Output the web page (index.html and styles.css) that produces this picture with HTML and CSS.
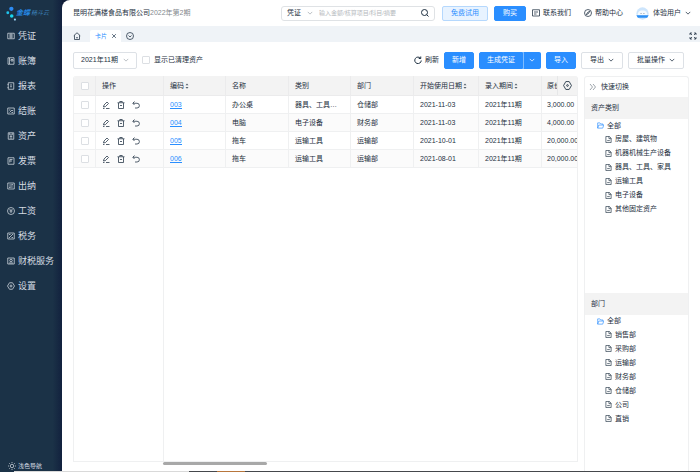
FILE: index.html
```html
<!DOCTYPE html>
<html lang="zh-CN">
<head>
<meta charset="utf-8">
<title>卡片 - 固定资产</title>
<link rel="stylesheet" href="styles.css">
</head>

<body>
<!-- shared icons -->
<svg class="sprite" aria-hidden="true">
  <symbol id="edit" viewBox="0 0 16 16"><path d="M3 12l1-4 6-6 3 3-6 6-4 1zM8 15h7M2 15h3"/></symbol>
  <symbol id="trash" viewBox="0 0 16 16"><path d="M1 3.500h14M5.500 3V1h5v2M3 4v11h10V4M6 9h4"/></symbol>
  <symbol id="undo" viewBox="0 0 16 16"><path d="M5 1L1.500 4.500 5 8M2 4.500h8a4.500 4.500 0 0 1 0 9.500H6"/></symbol>
  <symbol id="down" viewBox="0 0 16 16"><path d="M2 5l6 6 6-6"/></symbol>
  <symbol id="sort" viewBox="0 0 8 16"><path d="M1 6.500L4 3l3 3.500zM1 10l3 3.500L7 10z"/></symbol>
  <symbol id="doc" viewBox="0 0 16 16"><path d="M2 1h8l4 4v10H2zM9 1v5h5M5 10.500h6"/></symbol>
  <symbol id="folder" viewBox="0 0 16 16"><path d="M1.500 14V2h5l2 2.500h5V7M1.500 14L4 7h11.500L13 14z"/></symbol>
</svg>

<div class="app">
  <aside class="sidebar">
    <div class="logo">
      <svg class="logo-mark" viewBox="0 0 28 42">
        <circle cx="15" cy="8" r="6" fill="#2d8cf5"/>
        <circle cx="5" cy="19" r="4" fill="#1fc4ee"/>
        <circle cx="16" cy="28" r="5" fill="#18d6ee"/>
        <circle cx="25" cy="38" r="3" fill="#9fd4f5"/>
      </svg>
      <b>金蝶</b><i>精斗云</i>
    </div>
    <nav class="menu">
      <a href="#"><svg viewBox="0 0 16 16"><path d="M1.500 2.500h13v11h-13zM4 6h8M4 10h8M8 3v10"/></svg>凭证</a>
      <a href="#"><svg viewBox="0 0 16 16"><path d="M2 1.500h12v13H2zM5 2v12M8 5h4v3H8z"/></svg>账簿</a>
      <a href="#"><svg viewBox="0 0 16 16"><path d="M2.500 1.500h11v13h-11zM6 6h4M6 9.500h4M1 5h2M1 11h2"/></svg>报表</a>
      <a href="#"><svg viewBox="0 0 16 16"><path d="M1.500 2h13v12h-13zM4 6h3M5 11l5-5 2 2M9 11h3"/></svg>结账</a>
      <a href="#"><svg viewBox="0 0 16 16"><path d="M2.500 1.500h11v13h-11zM5.500 2v4h5V2M5.500 9h5M5.500 12h5"/></svg>资产</a>
      <a href="#"><svg viewBox="0 0 16 16"><path d="M2 1.500h12v13H2zM5.500 5H11M6 8h4M5.500 5v6"/></svg>发票</a>
      <a href="#"><svg viewBox="0 0 16 16"><path d="M1.500 2h13v12h-13zM4.500 6h7l-2-2M11.500 10h-7l2 2"/></svg>出纳</a>
      <a href="#"><svg viewBox="0 0 16 16"><circle cx="8" cy="8" r="7"/><path d="M5 4l3 3 3-3M5 8h6M8 7v5"/></svg>工资</a>
      <a href="#"><svg viewBox="0 0 16 16"><path d="M1.500 2h13v12h-13zM4 12l8-8M4 5h3M9 11h3"/></svg>税务</a>
      <a href="#"><svg viewBox="0 0 16 16"><path d="M1.500 2h13v12h-13zM4 12h8"/><circle cx="8" cy="7" r="2.500"/></svg>财税服务</a>
      <a href="#"><svg viewBox="0 0 16 16"><path d="M5 1.500h6L15 8l-4 6.500H5L1 8z"/><circle cx="8" cy="8" r="2"/></svg>设置</a>
    </nav>
    <button class="theme"><svg viewBox="0 0 16 16"><circle cx="8" cy="8" r="3.500"/><path d="M8 0v2M8 14v2M0 8h2M14 8h2M2.500 2.500l1.500 1.500M12 12l1.500 1.500M13.500 2.500L12 4M4 12l-1.500 1.500"/></svg>浅色导航</button>
  </aside>

  <div class="main">
    <header class="header">
      <div class="company">昆明花满楼食品有限公司<span>2022年第2期</span></div>
      <form class="search">
        <button type="button" class="search-type">凭证<svg><use href="#down"/></svg></button>
        <input type="text" aria-label="搜索" placeholder="输入金额/核算项目/科目/摘要">
        <button type="button" class="search-go" aria-label="查询"><svg viewBox="0 0 16 16"><circle cx="7" cy="7" r="6"/><path d="M11.500 11.500L15 15"/></svg></button>
      </form>
      <button class="btn trial">免费试用</button>
      <button class="btn primary buy">购买</button>
      <a class="link contact" href="#"><svg viewBox="0 0 16 16"><path d="M1 1.500h14v12.500H1zM4 6h8M4 10h5"/></svg>联系我们</a>
      <a class="link help" href="#"><svg viewBox="0 0 16 16"><circle cx="8" cy="8" r="7"/><path d="M11.500 4.500L9 9l-4.500 2.500L7 7z"/></svg>帮助中心</a>
      <button class="user">
        <svg class="avatar" viewBox="0 0 36 36"><circle cx="18" cy="18" r="17" fill="#cde5fc"/><path d="M4 23c2-10 5-13 14-13s12 3 14 13z" fill="#f4faff"/><path d="M1 23h34l-4 7H5z" fill="#2b8ff5"/><path d="M13 18h2M21 18h2" stroke="#33475c" stroke-width="2"/></svg>
        体验用户<svg><use href="#down"/></svg>
      </button>
    </header>

    <div class="tabs">
      <a href="#" class="home" aria-label="首页"><svg viewBox="0 0 16 16"><path d="M1.500 7.500L8 1.500l6.500 6M3 6.500V15h10V6.500M6 11.500h4"/></svg></a>
      <div class="tab">卡片<button aria-label="关闭"><svg viewBox="0 0 16 16"><path d="M3 3l10 10M13 3L3 13"/></svg></button></div>
      <button class="more" aria-label="更多"><svg viewBox="0 0 16 16"><circle cx="8" cy="8" r="7"/><path d="M5 7l3 3 3-3"/></svg></button>
      <button class="full" aria-label="全屏"><svg viewBox="0 0 16 16"><path d="M2 6V2h4M10 2h4v4M14 10v4h-4M6 14H2v-4M2 2l4 4M14 2l-4 4M2 14l4-4M14 14l-4-4"/></svg></button>
    </div>

    <div class="toolbar">
      <button class="btn period">2021年11期<svg><use href="#down"/></svg></button>
      <label class="cleared"><input type="checkbox">显示已清理资产</label>
      <button class="refresh"><svg viewBox="0 0 16 16"><path d="M13 4.500A6.500 6.500 0 1 0 14.500 9M13.500 1v4h-4"/></svg>刷新</button>
      <button class="btn primary">新增</button>
      <div class="split">
        <button class="btn primary">生成凭证</button>
        <button class="btn primary drop" aria-label="更多凭证操作"><svg><use href="#down"/></svg></button>
      </div>
      <button class="btn primary">导入</button>
      <button class="btn">导出<svg><use href="#down"/></svg></button>
      <button class="btn">批量操作<svg><use href="#down"/></svg></button>
    </div>

    <div class="content">
      <section class="grid">
        <div class="grid-view">
          <table>
            <colgroup>
              <col class="c-check"><col class="c-ops"><col class="c-short"><col class="c-text"><col class="c-short"><col class="c-text"><col class="c-date"><col class="c-text"><col class="c-text">
            </colgroup>
            <thead>
              <tr>
                <th class="check"><input type="checkbox" aria-label="全选"></th>
                <th>操作</th>
                <th>编码<svg><use href="#sort"/></svg></th>
                <th>名称</th>
                <th>类别</th>
                <th>部门</th>
                <th>开始使用日期<svg><use href="#sort"/></svg></th>
                <th>录入期间<svg><use href="#sort"/></svg></th>
                <th>原价</th>
              </tr>
            </thead>
            <tbody>
              <tr>
                <td class="check"><input type="checkbox" aria-label="选择003"></td>
                <td class="ops"><button aria-label="编辑"><svg><use href="#edit"/></svg></button><button aria-label="删除"><svg><use href="#trash"/></svg></button><button aria-label="还原"><svg><use href="#undo"/></svg></button></td>
                <td><a href="#">003</a></td><td>办公桌</td><td>器具、工具…</td><td>仓储部</td><td>2021-11-03</td><td>2021年11期</td><td>3,000.00</td>
              </tr>
              <tr>
                <td class="check"><input type="checkbox" aria-label="选择004"></td>
                <td class="ops"><button aria-label="编辑"><svg><use href="#edit"/></svg></button><button aria-label="删除"><svg><use href="#trash"/></svg></button><button aria-label="还原"><svg><use href="#undo"/></svg></button></td>
                <td><a href="#">004</a></td><td>电脑</td><td>电子设备</td><td>财务部</td><td>2021-11-03</td><td>2021年11期</td><td>4,000.00</td>
              </tr>
              <tr>
                <td class="check"><input type="checkbox" aria-label="选择005"></td>
                <td class="ops"><button aria-label="编辑"><svg><use href="#edit"/></svg></button><button aria-label="删除"><svg><use href="#trash"/></svg></button><button aria-label="还原"><svg><use href="#undo"/></svg></button></td>
                <td><a href="#">005</a></td><td>拖车</td><td>运输工具</td><td>运输部</td><td>2021-10-01</td><td>2021年11期</td><td>20,000.00</td>
              </tr>
              <tr>
                <td class="check"><input type="checkbox" aria-label="选择006"></td>
                <td class="ops"><button aria-label="编辑"><svg><use href="#edit"/></svg></button><button aria-label="删除"><svg><use href="#trash"/></svg></button><button aria-label="还原"><svg><use href="#undo"/></svg></button></td>
                <td><a href="#">006</a></td><td>拖车</td><td>运输工具</td><td>运输部</td><td>2021-08-01</td><td>2021年11期</td><td>20,000.00</td>
              </tr>
            </tbody>
          </table>
          <div class="frozen"></div>
          <button class="columns" aria-label="列设置"><svg viewBox="0 0 16 16"><path d="M5 1h6l4 7-4 7H5L1 8z"/><circle cx="8" cy="8" r="1.500"/></svg></button>
        </div>
        <div class="scroll"><div class="thumb"></div></div>
      </section>

      <aside class="panel">
        <button class="panel-top"><svg viewBox="0 0 16 16"><path d="M2 2l5 6-5 6M8 2l5 6-5 6"/></svg>快速切换</button>
        <section class="group types">
          <h2>资产类别</h2>
          <div class="tree">
            <a href="#" class="root"><svg><use href="#folder"/></svg>全部</a>
            <a href="#"><svg><use href="#doc"/></svg>房屋、建筑物</a>
            <a href="#"><svg><use href="#doc"/></svg>机器机械生产设备</a>
            <a href="#"><svg><use href="#doc"/></svg>器具、工具、家具</a>
            <a href="#"><svg><use href="#doc"/></svg>运输工具</a>
            <a href="#"><svg><use href="#doc"/></svg>电子设备</a>
            <a href="#"><svg><use href="#doc"/></svg>其他固定资产</a>
          </div>
        </section>
        <section class="group depts">
          <h2>部门</h2>
          <div class="tree">
            <a href="#" class="root"><svg><use href="#folder"/></svg>全部</a>
            <a href="#"><svg><use href="#doc"/></svg>销售部</a>
            <a href="#"><svg><use href="#doc"/></svg>采购部</a>
            <a href="#"><svg><use href="#doc"/></svg>运输部</a>
            <a href="#"><svg><use href="#doc"/></svg>财务部</a>
            <a href="#"><svg><use href="#doc"/></svg>仓储部</a>
            <a href="#"><svg><use href="#doc"/></svg>公司</a>
            <a href="#"><svg><use href="#doc"/></svg>直销</a>
          </div>
        </section>
      </aside>
    </div>
  </div>
</div>
<div class="edge"></div>
</body>
</html>
```

FILE: styles.css
```css
* {box-sizing: border-box;}

body {
  margin: 0;
  height: 100vh;
  display: flex;
  flex-direction: column;
  overflow: hidden;
  font: 7px/12px "Liberation Sans", "Noto Sans CJK SC", sans-serif;
  color: #1d2f40;
  background: #101d38;
}

button, input {
  font: inherit;
  color: inherit;
  margin: 0;
}
button {
  display: inline-flex;
  align-items: center;
  padding: 0;
  border: 0;
  background: none;
  white-space: nowrap;
}
a {color: inherit; text-decoration: none;}

svg {
  width: 8px;
  height: 8px;
  flex: none;
  fill: none;
  stroke: currentColor;
  stroke-width: 2;
}
.sprite {position: absolute; width: 0; height: 0;}

input[type="checkbox"] {
  appearance: none;
  width: 8px;
  height: 8px;
  border: 1px solid #dcdfe3;
  border-radius: 1px;
  background: #fff;
}

.app {display: flex; flex: 1; min-height: 0;}

/* sidebar */
.sidebar {
  flex: none;
  width: 62px;
  display: flex;
  flex-direction: column;
  color: #d5dce3;
  background: linear-gradient(to right, #1b3247 85%, #12213e);
}
.logo {
  display: flex;
  align-items: center;
  height: 23px;
  padding: 3px 0 0 6px;
  color: #2589e6;
  font-style: italic;
}
.logo b {font-size: 7px; margin-right: 1px;}
.logo i {font-size: 6px; color: #3d83bd;}
.logo-mark {width: 10px; height: 15px; stroke: none;}
.menu {display: flex; flex-direction: column;}
.menu a {
  display: flex;
  align-items: center;
  gap: 3px;
  height: 25px;
  padding-left: 7px;
  font-size: 9px;
  white-space: nowrap;
}
.menu svg {stroke-width: 1.5;}
.theme {
  gap: 2px;
  margin-top: auto;
  padding-left: 8px;
  font-size: 6px;
  line-height: 10px;
}
.theme svg {stroke-width: 1.5;}

/* main area */
.main {
  flex: 1;
  min-width: 0;
  display: flex;
  flex-direction: column;
  background: #fff;
  border-top-left-radius: 8px;
  overflow: hidden;
}
.header {
  flex: none;
  display: flex;
  align-items: center;
  height: 26px;
  padding: 0 9px 0 11px;
  white-space: nowrap;
}
.company span {color: #84898e;}
.search {
  display: flex;
  align-items: center;
  width: 154px;
  height: 15px;
  margin-left: auto;
  padding: 0 5px;
  border: 1px solid #dfe2e5;
  border-radius: 3px;
}
.search-type {gap: 6px;}
.search-type svg {color: #a5abb1; width: 6px;}
.search input {
  flex: 1;
  min-width: 0;
  padding: 0 0 0 6px;
  border: 0;
  outline: 0;
  font-size: 6px;
  background: none;
}
.search input::placeholder {color: #b6babe;}

.btn {
  justify-content: center;
  gap: 4px;
  height: 17px;
  padding: 0 8px;
  border: 1px solid #dde1e6;
  border-radius: 2px;
  background: #fff;
}
.btn svg, .user > svg:last-child {width: 6px;}
.btn.primary {
  padding: 0 7px;
  color: #fff;
  border-color: #2a8eff;
  background: #2a8eff;
}
.btn.trial {
  height: 15px;
  margin-left: 7px;
  color: #2a8eff;
  border-color: #b5d8fd;
  background: #e8f3ff;
}
.btn.buy {height: 15px; margin-left: 6px; padding: 0 8px;}
.link {display: flex; align-items: center; gap: 3px;}
.link svg {stroke-width: 1.5;}
.contact {margin-left: 6px;}
.help {margin-left: 13px;}
.user {gap: 4px; margin-left: 13px;}
.avatar {width: 13px; height: 13px; stroke: none;}

.tabs {
  flex: none;
  display: flex;
  align-items: flex-end;
  height: 16px;
  padding: 0 3px 0 11px;
  background: #eff3f7;
}
.tabs > a, .tabs > button {display: flex; align-items: center; height: 12px;}
.tabs svg {stroke-width: 1.5;}
.tab {
  display: flex;
  align-items: center;
  gap: 4px;
  height: 12px;
  margin: 0 5px 0 9px;
  padding: 0 4px 0 5px;
  border-radius: 2px 2px 0 0;
  color: #2a8eff;
  font-size: 6px;
  background: #fff;
}
.tab button {color: #33475c;}
.tab svg {width: 6px; height: 6px; stroke-width: 2;}
.tabs .full {margin-left: auto;}

.toolbar {
  flex: none;
  display: flex;
  align-items: center;
  height: 34px;
  padding: 2px 16px 0 11px;
}
.toolbar > * + * {margin-left: 5px;}
.period {gap: 5px; width: 64px; padding: 0;}
.period svg {color: #a5abb1;}
.cleared {display: flex; align-items: center; gap: 4px;}
.toolbar .refresh {gap: 3px; margin-left: auto;}
.split {display: flex;}
.split .btn {border-radius: 2px 0 0 2px;}
.split .btn.drop {
  padding: 0 5px;
  border-left-color: #7fbcff;
  border-radius: 0 2px 2px 0;
}

.content {flex: 1; min-height: 0; display: flex; gap: 6px; padding: 0 11px;}

/* asset table */
.grid {flex: 1; min-width: 0; display: flex; flex-direction: column;}
.grid-view {
  position: relative;
  flex: 1;
  min-height: 0;
  display: flex;
  flex-direction: column;
  overflow: hidden;
  border: 1px solid #eff0f1;
  border-top: 0;
  border-radius: 3px 3px 0 0;
}
table {
  flex: none;
  width: 531px;
  table-layout: fixed;
  border-collapse: separate;
  border-spacing: 0;
}
.c-check {width: 22px;}
.c-ops {width: 68px;}
.c-short {width: 62px;}
.c-text {width: 63px;}
.c-date {width: 65px;}
th, td {
  height: 18px;
  padding: 0 0 0 6px;
  border-right: 1px solid #eff0f1;
  border-bottom: 1px solid #eff0f1;
  text-align: left;
  font-weight: 400;
  white-space: nowrap;
  overflow: hidden;
}
th {height: 20px; background: #f3f3f3; border-color: #ebebec;}
th svg {
  width: 4px;
  margin-left: 1px;
  vertical-align: middle;
  fill: #55626e;
  stroke: none;
}
tbody tr:nth-child(even) {background: #fbfbfb;}
td a {color: #2a8eff; border-bottom: 1px solid #2a8eff;}
td:last-child, th:last-child {padding-left: 5px;}
.check {padding: 0;}
.check input {display: block; margin: 0 auto;}
.ops button {margin-right: 7px; vertical-align: middle;}
.ops svg {stroke-width: 1.5;}
.frozen {flex: 1; width: 90px; border-right: 1px solid #eff0f1;}

/* stays over the last header cell */
.columns {
  position: absolute;
  top: 0;
  right: 0;
  width: 20px;
  height: 19px;
  justify-content: center;
  border-left: 1px solid #e6e7e8;
  background: #f3f3f3;
}
.columns svg {width: 9px; height: 9px; stroke-width: 1.5;}
.scroll {flex: none; height: 9px; padding: 0 0 0 90px;}
.thumb {width: 25%; height: 3px; border-radius: 2px; background: #a8a8a8;}

/* quick switch */
.panel {
  flex: none;
  width: 105px;
  display: flex;
  flex-direction: column;
  border: 1px solid #eff0f1;
  border-bottom: 0;
  border-radius: 3px 3px 0 0;
}
.panel-top {flex: none; gap: 4px; height: 20px; padding-left: 4px;}
.panel-top svg {color: #7d8790; stroke-width: 1.5;}
.group {flex-basis: 0;}
.types {flex-grow: 11;}
.depts {flex-grow: 10;}
h2 {
  margin: 0;
  padding-left: 6px;
  font-size: 7px;
  font-weight: 400;
  line-height: 22px;
  background: #f3f3f3;
}
.tree a {
  display: flex;
  align-items: center;
  gap: 3px;
  height: 14px;
  padding-left: 20px;
}
.tree a.root {height: 13px; padding-left: 12px;}
.root svg {color: #2a8eff;}
.tree svg {width: 7px; height: 7px; stroke-width: 1.5;}

/* strip of the desktop under the window */
.edge {
  flex: none;
  height: 1px;
  background: linear-gradient(to right, #1b3247 2%, #d9d9d9 2% 27%, #45484c 27% 31%, #b8763c 31% 35%, #45484c 35%);
}
```
